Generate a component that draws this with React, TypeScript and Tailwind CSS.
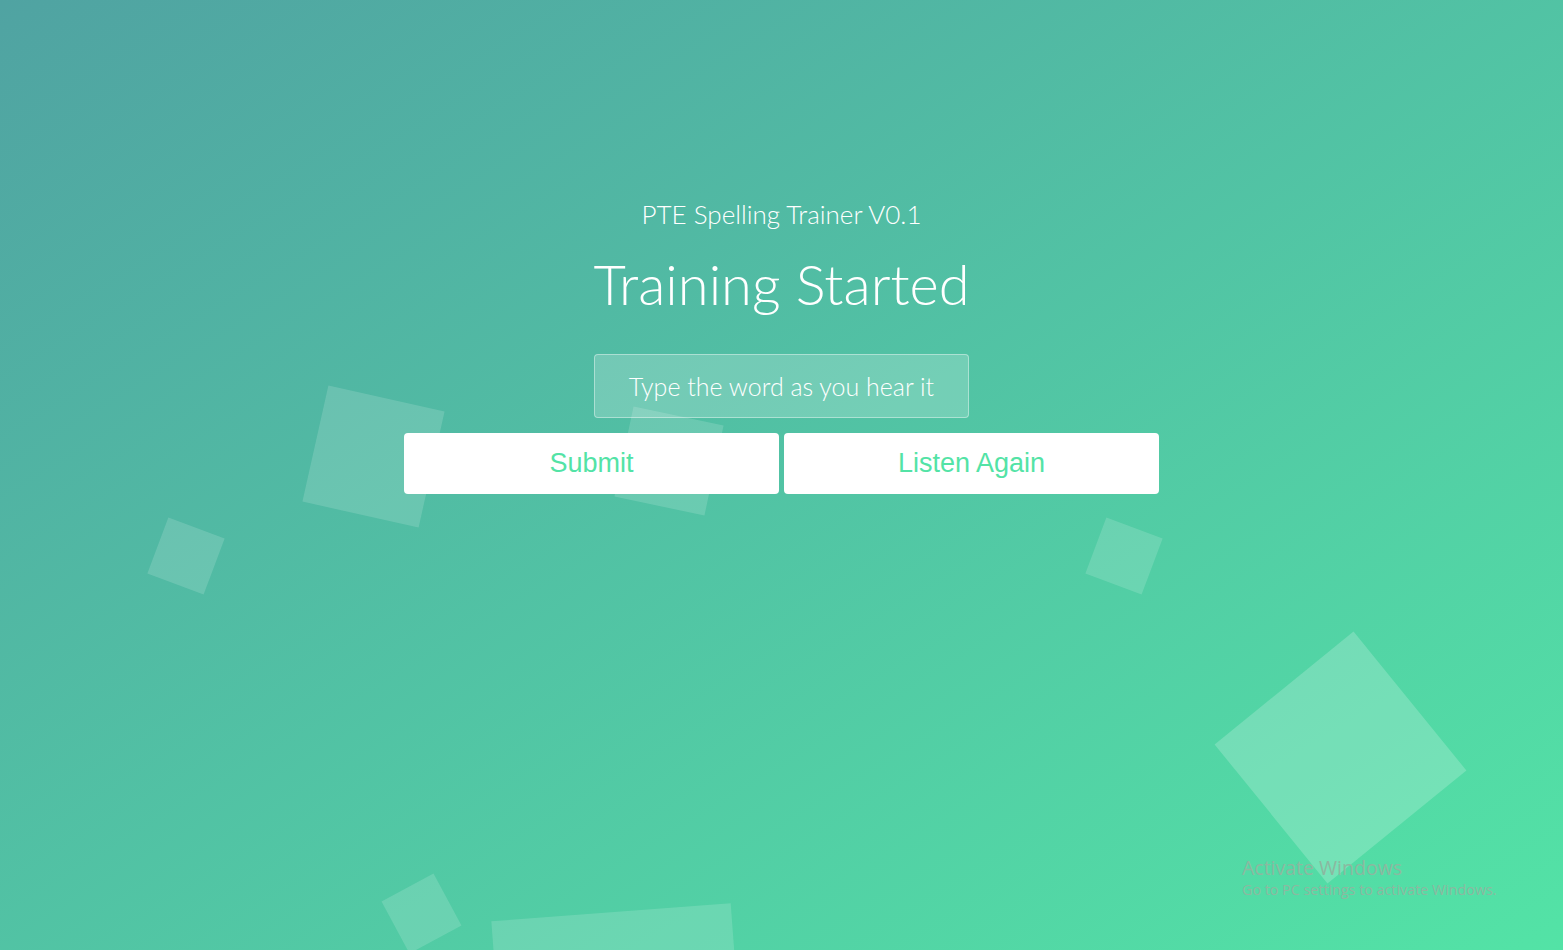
import React from "react";

type Square = { x: number; y: number; size: number; angle: number; alpha: string };

// centre x/y, side length, rotation
const squares: Square[] = [
  { x: 373.5, y: 456.5, size: 119, angle: 12.6, alpha: "bg-white/15" },
  { x: 185.5, y: 555.5, size: 60, angle: 20.5, alpha: "bg-white/15" },
  { x: 669, y: 461, size: 92, angle: 12, alpha: "bg-white/15" },
  { x: 1123.5, y: 555.5, size: 60, angle: 20.5, alpha: "bg-white/15" },
  { x: 1340, y: 757.5, size: 179, angle: 50.9, alpha: "bg-white/20" },
  { x: 421, y: 913, size: 59, angle: -28.3, alpha: "bg-white/15" },
  { x: 620, y: 1032, size: 240, angle: -4.3, alpha: "bg-white/15" },
];

const App = () => {
  return (
    <div className="relative h-[950px] w-full overflow-hidden bg-linear-to-br/srgb from-[#50a3a2] to-[#53e3a6] font-['Lato',sans-serif]">
      {squares.map((s, i) => (
        <div
          key={i}
          className={`absolute ${s.alpha}`}
          style={{
            left: s.x - s.size / 2,
            top: s.y - s.size / 2,
            width: s.size,
            height: s.size,
            transform: `rotate(${s.angle}deg)`,
          }}
        />
      ))}

      <div className="relative flex flex-col items-center pt-[198px]">
        <h2 className="text-[26px] font-light leading-[32px] text-white">
          PTE Spelling Trainer V0.1
        </h2>
        <h1 className="mt-[18px] text-[56px] font-light leading-[72px] text-white">
          Training Started
        </h1>
        <form
          className="mt-[34px] flex flex-col items-center gap-[15px]"
          onSubmit={(e) => e.preventDefault()}
        >
          <input
            type="text"
            placeholder="Type the word as you hear it"
            className="h-[64px] w-[375px] rounded-[4px] border border-white/40 bg-white/20 text-center text-[25px] font-light text-white placeholder:text-white focus:outline-none"
          />
          <div className="flex gap-[5px]">
            <button
              type="submit"
              className="h-[61px] w-[375px] rounded-[4px] bg-white font-['Liberation_Sans',Arial,sans-serif] text-[27px] text-[#53e3a6]"
            >
              Submit
            </button>
            <button
              type="button"
              className="h-[61px] w-[375px] rounded-[4px] bg-white font-['Liberation_Sans',Arial,sans-serif] text-[27px] text-[#53e3a6]"
            >
              Listen Again
            </button>
          </div>
        </form>
      </div>

      <div className="pointer-events-none absolute left-[1242px] top-[856px] font-['Open_Sans',sans-serif] text-[#8cb8a0]">
        <p className="text-[19.5px] leading-[24px]">Activate Windows</p>
        <p className="text-[14.3px] leading-[20px]">Go to PC settings to activate Windows.</p>
      </div>
    </div>
  );
};

export default App;
